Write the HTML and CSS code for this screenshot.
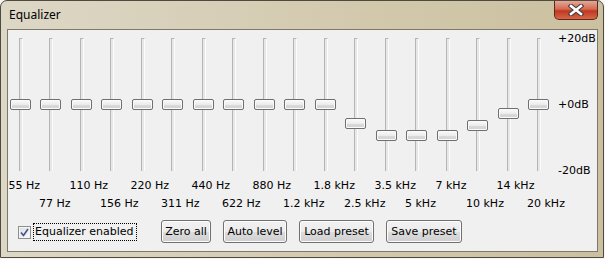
FILE: index.html
```html
<!doctype html>
<html lang="en">
<head>
	<meta charset="UTF-8">
	<title>Equalizer</title>
	<link rel="stylesheet" href="styles.css">
</head>
<body>
<div class="window">
	<div class="titlebar">
		<span class="title">Equalizer</span>
		<div class="close">
			<svg width="16" height="12" viewBox="0 0 16 12">
				<path d="M3 2 L13 10 M13 2 L3 10" stroke="#3c3c3c" stroke-width="4.6" stroke-linecap="square"/>
				<path d="M3 2 L13 10 M13 2 L3 10" stroke="#fff" stroke-width="2.6" stroke-linecap="square"/>
			</svg>
		</div>
	</div>
	<div class="client">
		<div class="eq">
			<div class="bands">
				<div class="band"><div class="slider"><div class="track"></div><div class="thumb" style="top:61px"></div></div><div class="freq">55 Hz</div><div class="freq"></div></div>
				<div class="band"><div class="slider"><div class="track"></div><div class="thumb" style="top:61px"></div></div><div class="freq"></div><div class="freq">77 Hz</div></div>
				<div class="band"><div class="slider"><div class="track"></div><div class="thumb" style="top:61px"></div></div><div class="freq">110 Hz</div><div class="freq"></div></div>
				<div class="band"><div class="slider"><div class="track"></div><div class="thumb" style="top:61px"></div></div><div class="freq"></div><div class="freq">156 Hz</div></div>
				<div class="band"><div class="slider"><div class="track"></div><div class="thumb" style="top:61px"></div></div><div class="freq">220 Hz</div><div class="freq"></div></div>
				<div class="band"><div class="slider"><div class="track"></div><div class="thumb" style="top:61px"></div></div><div class="freq"></div><div class="freq">311 Hz</div></div>
				<div class="band"><div class="slider"><div class="track"></div><div class="thumb" style="top:61px"></div></div><div class="freq">440 Hz</div><div class="freq"></div></div>
				<div class="band"><div class="slider"><div class="track"></div><div class="thumb" style="top:61px"></div></div><div class="freq"></div><div class="freq">622 Hz</div></div>
				<div class="band"><div class="slider"><div class="track"></div><div class="thumb" style="top:61px"></div></div><div class="freq">880 Hz</div><div class="freq"></div></div>
				<div class="band"><div class="slider"><div class="track"></div><div class="thumb" style="top:61px"></div></div><div class="freq"></div><div class="freq">1.2 kHz</div></div>
				<div class="band"><div class="slider"><div class="track"></div><div class="thumb" style="top:61px"></div></div><div class="freq">1.8 kHz</div><div class="freq"></div></div>
				<div class="band"><div class="slider"><div class="track"></div><div class="thumb" style="top:80px"></div></div><div class="freq"></div><div class="freq">2.5 kHz</div></div>
				<div class="band"><div class="slider"><div class="track"></div><div class="thumb" style="top:92px"></div></div><div class="freq">3.5 kHz</div><div class="freq"></div></div>
				<div class="band"><div class="slider"><div class="track"></div><div class="thumb" style="top:92px"></div></div><div class="freq"></div><div class="freq">5 kHz</div></div>
				<div class="band"><div class="slider"><div class="track"></div><div class="thumb" style="top:92px"></div></div><div class="freq">7 kHz</div><div class="freq"></div></div>
				<div class="band"><div class="slider"><div class="track"></div><div class="thumb" style="top:82px"></div></div><div class="freq"></div><div class="freq">10 kHz</div></div>
				<div class="band"><div class="slider"><div class="track"></div><div class="thumb" style="top:70px"></div></div><div class="freq">14 kHz</div><div class="freq"></div></div>
				<div class="band"><div class="slider"><div class="track"></div><div class="thumb" style="top:61px"></div></div><div class="freq"></div><div class="freq">20 kHz</div></div>
			</div>
			<div class="scale">
				<span>+20dB</span>
				<span>+0dB</span>
				<span>-20dB</span>
			</div>
		</div>
		<div class="controls">
			<span class="checkbox">
				<svg width="9" height="9" viewBox="0 0 9 9">
					<path d="M1 4.5 L3.5 7.5 L8 1" stroke="#3f5398" stroke-width="1.6" fill="none"/>
				</svg>
			</span>
			<span class="check-label">Equalizer enabled</span>
			<div class="buttons">
				<button class="btn btn-zero">Zero all</button>
				<button class="btn btn-auto">Auto level</button>
				<button class="btn btn-load">Load preset</button>
				<button class="btn btn-save">Save preset</button>
			</div>
		</div>
	</div>
</div>
</body>
</html>
```

FILE: styles.css
```css
	body{
		margin: 0;
		background-color: #f6f6f6;
		font-family: "DejaVu Sans", sans-serif;
		font-size: 11px;
		color: #000;
	}
	.window{
		width: 604px;
		height: 258px;
		box-sizing: border-box;
		border: 1px solid #4e4a40;
		border-radius: 7px 7px 0 0;
		background: linear-gradient(to right, #ddd7c6, #d3caaf 55%, #cbc09f);
		padding: 0 5px 5px 6px;
	}
	.titlebar{
		height: 28px;
		display: flex;
		align-items: center;
		justify-content: space-between;
	}
	.title{
		font-family: "Noto Sans", sans-serif;
		font-size: 12px;
		margin-left: 2px;
		margin-top: -1px;
	}
	.close{
		width: 44px;
		height: 19px;
		margin-top: -9px;
		box-sizing: border-box;
		border: 1px solid #5b2a1e;
		border-top: none;
		border-radius: 0 0 5px 5px;
		background: linear-gradient(to bottom, #e6a797, #d36a52 45%, #c0391f 55%, #d8654a);
		display: flex;
		justify-content: center;
		align-items: center;
	}
	.client{
		height: 223px;
		box-sizing: border-box;
		border: 1px solid #7d786a;
		background-color: #f0f0f0;
		padding: 8px 0 0 1.5px;
	}
	.eq{
		display: flex;
	}
	.bands{
		display: flex;
		gap: 9.5px;
	}
	.band{
		width: 21px;
		display: flex;
		flex-direction: column;
	}
	.slider{
		height: 133px;
		position: relative;
	}
	.track{
		width: 2px;
		height: 132px;
		margin-left: 9px;
		background-color: #e7e7e7;
		border-left: 1px solid #b3b6b6;
		border-right: 1px solid #fcfcfc;
		border-top: 1px solid #b3b6b6;
	}
	.thumb{
		position: absolute;
		left: 0;
		width: 21px;
		height: 11px;
		box-sizing: border-box;
		border: 1px solid #6f6f6f;
		border-radius: 2px;
		background: linear-gradient(to bottom, #fbfbfb, #ececec 50%, #dadada 55%, #d2d2d2);
		box-shadow: inset 0 0 0 1px #fafafa;
	}
	.freq{
		height: 18px;
		line-height: 18px;
		margin-left: -1px;
		white-space: nowrap;
	}
	.slider + .freq{
		margin-top: 6px;
	}
	.scale{
		height: 145px;
		margin-top: -6.5px;
		margin-left: 9px;
		display: flex;
		flex-direction: column;
		justify-content: space-between;
		line-height: 13px;
	}
	.controls{
		display: flex;
		align-items: center;
		margin-top: 7px;
		padding-left: 8.5px;
	}
	.checkbox{
		width: 13px;
		height: 13px;
		box-sizing: border-box;
		border: 1px solid #8e8f8f;
		background: linear-gradient(135deg, #dcdcdc, #fbfbfb);
		box-shadow: inset 0 0 0 1px #f4f4f4;
		display: flex;
		justify-content: center;
		align-items: center;
		margin-top: 1px;
	}
	.check-label{
		margin-left: 2px;
		width: 104px;
		height: 18px;
		box-sizing: border-box;
		border: 1px dotted #000;
		line-height: 16px;
		padding-left: 1px;
		white-space: nowrap;
	}
	.buttons{
		display: flex;
		gap: 12px;
		margin-left: 24px;
	}
	.btn{
		height: 23px;
		padding: 0;
		font-family: "DejaVu Sans", sans-serif;
		font-size: 11px;
		color: #000;
		border: 1px solid #707070;
		border-radius: 3px;
		background: linear-gradient(to bottom, #f2f2f2, #ebebeb 50%, #dddddd 51%, #cfcfcf);
		box-shadow: inset 0 0 0 1px #fcfcfc;
	}
	.btn-zero{ width: 50px; }
	.btn-auto{ width: 64px; }
	.btn-load{ width: 75px; }
	.btn-save{ width: 76px; }
```
